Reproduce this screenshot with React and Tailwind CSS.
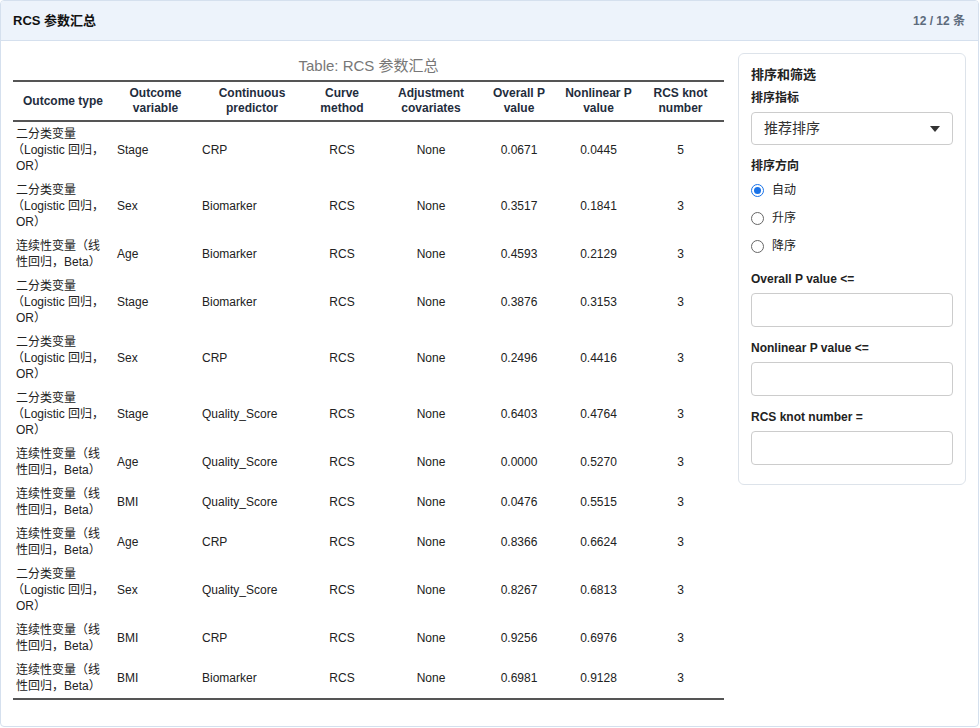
export default function App() {
  const B = ["二分类变量", "（Logistic 回归，", "OR）"];
  const C = ["连续性变量（线", "性回归，Beta）"];
  const rows = [
    [B, "Stage", "CRP", "0.0671", "0.0445", "5"],
    [B, "Sex", "Biomarker", "0.3517", "0.1841", "3"],
    [C, "Age", "Biomarker", "0.4593", "0.2129", "3"],
    [B, "Stage", "Biomarker", "0.3876", "0.3153", "3"],
    [B, "Sex", "CRP", "0.2496", "0.4416", "3"],
    [B, "Stage", "Quality_Score", "0.6403", "0.4764", "3"],
    [C, "Age", "Quality_Score", "0.0000", "0.5270", "3"],
    [C, "BMI", "Quality_Score", "0.0476", "0.5515", "3"],
    [C, "Age", "CRP", "0.8366", "0.6624", "3"],
    [B, "Sex", "Quality_Score", "0.8267", "0.6813", "3"],
    [C, "BMI", "CRP", "0.9256", "0.6976", "3"],
    [C, "BMI", "Biomarker", "0.6981", "0.9128", "3"],
  ];
  const f = { fontFamily: '"Liberation Sans", Arial, "Noto Sans CJK SC", sans-serif' };
  const th = "px-1 py-[4px] font-bold text-[12px] leading-[15px] text-[#1f2d3d] text-center align-middle";
  const td = "px-1 py-[4px] text-[12px] leading-[16px] text-[#222] align-middle";
  const radio = (on) => (
    <span className={"w-[13px] h-[13px] rounded-full border inline-flex items-center justify-center " + (on ? "border-[#1a73e8] bg-white" : "border-[#666] bg-white")}>
      {on && <span className="w-[7px] h-[7px] rounded-full bg-[#1a73e8]" />}
    </span>
  );
  return (
    <div style={f} className="w-[980px] h-[728px] bg-white">
      <div className="w-[979px] h-[727px] border border-[#d5e0ee] rounded-[4px] overflow-hidden">
        <div className="h-[40px] bg-[#edf3fb] border-b border-[#d5e0ee] flex items-center justify-between px-[12px]">
          <span className="text-[13px] font-bold text-[#111]">RCS 参数汇总</span>
          <span className="text-[12px] font-bold text-[#5d6b7c] pr-[1px]">12 / 12 条</span>
        </div>
        <div className="flex px-[12px] pt-[12px] gap-[14px]">
          <div className="w-[711px] pt-[4px]">
            <div className="text-center text-[15px] text-[#777] leading-[18px] pb-[5px]">Table: RCS 参数汇总</div>
            <table className="w-[711px] border-collapse table-fixed">
              <colgroup>
                <col className="w-[100px]" /><col className="w-[85px]" /><col className="w-[102px]" /><col className="w-[84px]" />
                <col className="w-[94px]" /><col className="w-[82px]" /><col className="w-[77px]" /><col className="w-[87px]" />
              </colgroup>
              <thead>
                <tr className="border-t-2 border-b-2 border-[#555] h-[38px]">
                  <th className={th}>Outcome type</th>
                  <th className={th}>Outcome<br />variable</th>
                  <th className={th + " pl-[10px]"}>Continuous<br />predictor</th>
                  <th className={th}>Curve<br />method</th>
                  <th className={th}>Adjustment<br />covariates</th>
                  <th className={th}>Overall P<br />value</th>
                  <th className={th}>Nonlinear P<br />value</th>
                  <th className={th}>RCS knot<br />number</th>
                </tr>
              </thead>
              <tbody className="border-b-2 border-[#555]">
                {rows.map((r, i) => (
                  <tr key={i}>
                    <td className={td + " pl-[3px]"}>{r[0].map((l, j) => <div key={j} className={l.startsWith("（") ? "-ml-[4px]" : ""}>{l}</div>)}</td>
                    <td className={td}>{r[1]}</td>
                    <td className={td}>{r[2]}</td>
                    <td className={td + " text-center"}>RCS</td>
                    <td className={td + " text-center"}>None</td>
                    <td className={td + " text-center"}>{r[3]}</td>
                    <td className={td + " text-center"}>{r[4]}</td>
                    <td className={td + " text-center"}>{r[5]}</td>
                  </tr>
                ))}
              </tbody>
            </table>
          </div>
          <div className="w-[229px] h-[432px] border border-[#dde3ea] rounded-[6px] px-[12px] pt-[12px] text-[#222]">
            <div className="text-[13px] font-bold leading-[18px]">排序和筛选</div>
            <div className="text-[12px] font-bold mt-[6px] leading-[16px]">排序指标</div>
            <div className="mt-[6px] h-[33px] border border-[#ccc] rounded-[4px] flex items-center justify-between px-[12px] text-[14px] text-[#333]">
              <span>推荐排序</span>
              <svg width="10" height="6" viewBox="0 0 10 6"><path d="M0 0h10L5 6z" fill="#333" /></svg>
            </div>
            <div className="text-[12px] font-bold mt-[13px] leading-[16px]">排序方向</div>
            <div className="mt-[7px] flex flex-col gap-[10px] text-[12px] leading-[18px]">
              {[["自动", true], ["升序", false], ["降序", false]].map(([t, on]) => (
                <div key={t} className="flex items-center gap-[8px]">{radio(on)}<span>{t}</span></div>
              ))}
            </div>
            {["Overall P value <=", "Nonlinear P value <=", "RCS knot number ="].map((l, i) => (
              <div key={l} className={i === 0 ? "mt-[16px]" : "mt-[13px]"}>
                <div className="text-[12px] font-bold leading-[16px]">{l}</div>
                <div className="mt-[6px] h-[34px] border border-[#ccc] rounded-[4px]" />
              </div>
            ))}
          </div>
        </div>
      </div>
    </div>
  );
}
